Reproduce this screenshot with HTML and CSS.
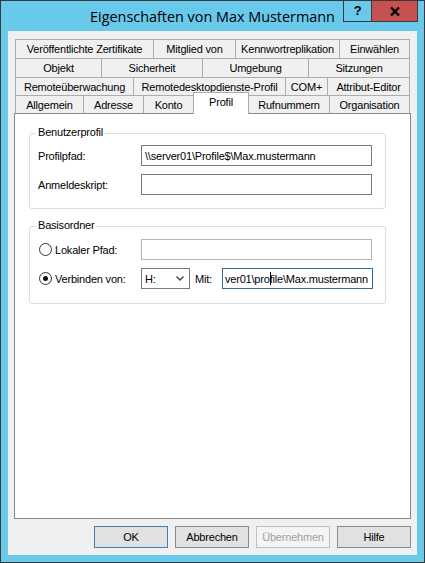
FILE: index.html
```
<!DOCTYPE html>
<html lang="de">
<head>
<meta charset="utf-8">
<title>Eigenschaften von Max Mustermann</title>
<link rel="stylesheet" href="styles.css">
</head>
<body>
<div class="window">
  <div class="titlebar">
    <div class="title">Eigenschaften von Max Mustermann</div>
  </div>
  <div class="caption">
    <div class="cap-help">?</div>
    <div class="cap-close">
      <svg width="10" height="9" viewBox="0 0 10 9"><path d="M1 0.5 L9 8.5 M9 0.5 L1 8.5" stroke="#000" stroke-width="2.4" fill="none"/></svg>
    </div>
  </div>
  <div class="client">
    <div class="tabs">
      <div class="tabrow r1">
        <div class="tab">Veröffentlichte Zertifikate</div>
        <div class="tab">Mitglied von</div>
        <div class="tab">Kennwortreplikation</div>
        <div class="tab">Einwählen</div>
      </div>
      <div class="tabrow r2">
        <div class="tab">Objekt</div>
        <div class="tab">Sicherheit</div>
        <div class="tab">Umgebung</div>
        <div class="tab">Sitzungen</div>
      </div>
      <div class="tabrow r3">
        <div class="tab">Remoteüberwachung</div>
        <div class="tab">Remotedesktopdienste-Profil</div>
        <div class="tab">COM+</div>
        <div class="tab">Attribut-Editor</div>
      </div>
      <div class="tabrow r4">
        <div class="tab">Allgemein</div>
        <div class="tab">Adresse</div>
        <div class="tab">Konto</div>
        <div class="tab sel">Profil</div>
        <div class="tab">Rufnummern</div>
        <div class="tab">Organisation</div>
      </div>
    </div>
    <div class="panel">
      <div class="group">
        <div class="gtitle">Benutzerprofil</div>
        <div class="form">
          <div class="lbl">Profilpfad:</div>
          <div class="input">\\server01\Profile$\Max.mustermann</div>
          <div class="lbl">Anmeldeskript:</div>
          <div class="input"></div>
        </div>
      </div>
      <div class="group g2">
        <div class="gtitle">Basisordner</div>
        <div class="form">
          <div class="lbl radio-row"><span class="radio"></span><span class="rlabel">Lokaler Pfad:</span></div>
          <div class="input disabled"></div>
          <div class="lbl radio-row"><span class="radio checked"></span><span class="rlabel">Verbinden von:</span></div>
          <div class="connect">
            <div class="select"><span>H:</span>
              <svg width="8" height="5" viewBox="0 0 8 5"><path d="M0.5 0.5 L4 4 L7.5 0.5" stroke="#444" stroke-width="1.4" fill="none"/></svg>
            </div>
            <span class="mit">Mit:</span>
            <div class="input focused">ver01\pro<span class="caret"></span>file\Max.mustermann</div>
          </div>
        </div>
      </div>
    </div>
    <div class="buttons">
      <div class="btn default">OK</div>
      <div class="btn">Abbrechen</div>
      <div class="btn disabled">Übernehmen</div>
      <div class="btn">Hilfe</div>
    </div>
  </div>
</div>
</body>
</html>
```
FILE: styles.css
```
* { box-sizing: border-box; }
html, body { margin: 0; padding: 0; }
body {
  font-family: "Liberation Sans", Arial, sans-serif;
  font-size: 11px;
  letter-spacing: -0.2px;
  color: #000;
  background: #fff;
}
.window {
  position: relative;
  width: 425px;
  height: 563px;
  border: 1px solid #3a3a3a;
  background: #68c9eb;
  padding: 0 7px 7px;
  display: flex;
  flex-direction: column;
}
.titlebar {
  height: 30px;
  flex: none;
  margin: 0 -7px;
  display: flex;
  align-items: center;
  justify-content: center;
}
.title {
  font-family: "Open Sans", "Noto Sans", sans-serif;
  font-size: 14.4px;
  letter-spacing: 0;
  color: #000;
  margin-top: 1px;
}
.caption {
  position: absolute;
  top: -1px;
  right: 6px;
  display: flex;
}
.cap-help {
  width: 29px;
  height: 22px;
  border: 1px solid #3a3a3a;
  display: flex;
  align-items: center;
  justify-content: center;
  font-weight: bold;
  font-size: 13px;
  padding-bottom: 1px;
}
.cap-close {
  width: 47px;
  height: 22px;
  margin-left: -1px;
  border: 1px solid #3a3a3a;
  background: #c75050;
  display: flex;
  align-items: center;
  justify-content: center;
}
.client {
  flex: 1;
  background: #f0f0f0;
  padding: 8px 6px 7px;
  display: flex;
  flex-direction: column;
}
.tabs { margin: 0 1px; flex: none; }
.tabrow { display: grid; }
.r1 { grid-template-columns: 138px 82px 104px 71px; height: 19px; }
.r2 { grid-template-columns: 86px 101px 106px 102px; height: 19px; }
.r3 { grid-template-columns: 118px 152px 42px 83px; height: 18px; }
.r4 { grid-template-columns: 68px 60px 50px 55px 81px 81px; height: 18px; }
.tab {
  border-top: 1px solid #acacac;
  border-left: 1px solid #acacac;
  background: #f0f0f0;
  display: flex;
  align-items: center;
  justify-content: center;
  white-space: nowrap;
}
.tab:last-child { border-right: 1px solid #acacac; }
.tab.sel {
  position: relative;
  z-index: 1;
  background: #fff;
  border-right: 1px solid #acacac;
  margin: -3px -1px -1px 0;
  padding-bottom: 4px;
}
.panel {
  height: 406px;
  flex: none;
  border: 1px solid #898989;
  background: #fff;
  padding: 19px 24px 0 14px;
}
.group {
  border: 1px solid #dcdcdc;
  border-radius: 3px;
  padding: 0 13px 13px 8px;
}
.group.g2 { margin-top: 17px; padding-bottom: 14px; }
.gtitle {
  width: max-content;
  height: 13px;
  line-height: 13px;
  margin: -8px 0 0 -2px;
  padding: 0 2px;
  background: #fff;
}
.form {
  display: grid;
  grid-template-columns: 103px 231px;
  row-gap: 8px;
  align-items: center;
  margin-top: 6px;
}
.g2 .form { margin-top: 7px; }
.input {
  height: 21px;
  border: 1px solid #7a7a7a;
  background: #fff;
  padding: 0 3px;
  display: flex;
  align-items: center;
  white-space: nowrap;
  overflow: hidden;
}
.input.disabled { border-color: #b4b4b4; }
.input.focused {
  width: 151px;
  flex: none;
  border-color: #2f6ea3;
  padding-left: 2px;
}
.caret {
  display: inline-block;
  width: 0;
  height: 13px;
  border-left: 1px solid #000;
  margin: 0 -1px 0 0;
}
.radio-row { display: flex; align-items: center; }
.radio {
  width: 13px;
  height: 13px;
  margin-left: 1px;
  border: 1px solid #333;
  border-radius: 50%;
  background: #fff;
  display: flex;
  align-items: center;
  justify-content: center;
  flex: none;
}
.radio.checked::after {
  content: "";
  width: 5px;
  height: 5px;
  border-radius: 50%;
  background: #111;
}
.rlabel { margin-left: 3px; }
.connect { display: flex; align-items: center; }
.select {
  width: 49px;
  height: 21px;
  flex: none;
  border: 1px solid #7a7a7a;
  background: #fff;
  display: flex;
  align-items: center;
  justify-content: space-between;
  padding: 0 5px 0 3px;
}
.mit { width: 27px; margin-left: 5px; flex: none; }
.buttons {
  display: flex;
  justify-content: flex-end;
  gap: 7px;
  margin-top: 7px;
  flex: none;
}
.btn {
  width: 74px;
  height: 22px;
  border: 1px solid #8a8a8a;
  background: #e1e1e1;
  display: flex;
  align-items: center;
  justify-content: center;
}
.btn.default { border-color: #3c7fb1; }
.btn.disabled {
  border-color: #bfbfbf;
  background: #f4f4f4;
  color: #a0a0a0;
}
```
